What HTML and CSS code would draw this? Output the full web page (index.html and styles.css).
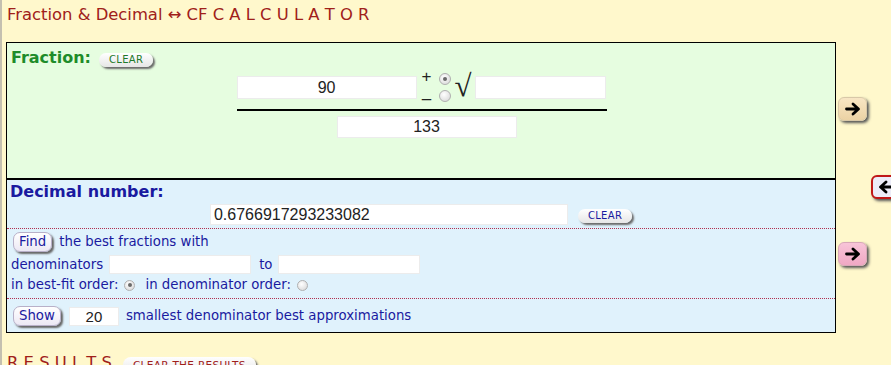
FILE: index.html
```html
<!DOCTYPE html>
<html>
<head>
<meta charset="utf-8">
<link rel="stylesheet" href="styles.css">
</head>
<body>
<div class="page">
  <div class="title">Fraction &amp; Decimal ↔ CF C A L C U L A T O R</div>
  <div class="main">
    <div class="calc">
      <div class="frac-box">
        <div class="head"><span class="label green">Fraction:</span><span class="pill green-t">CLEAR</span></div>
        <div class="fraction">
          <div class="num-row">
            <div class="inp num">90</div>
            <div class="pm">
              <div class="pm-row"><span class="sign">+</span><span class="radio on"></span></div>
              <div class="pm-row"><span class="sign">–</span><span class="radio"></span></div>
            </div>
            <span class="sqrt">√</span>
            <div class="inp rad"></div>
          </div>
          <div class="bar"></div>
          <div class="inp den">133</div>
        </div>
      </div>
      <div class="dec-box">
        <div class="label blue">Decimal number:</div>
        <div class="dec-row">
          <div class="inp dec">0.6766917293233082</div>
          <span class="pill blue-t">CLEAR</span>
        </div>
        <div class="find">
          <div class="line"><span class="btn">Find</span><span class="txt">the best fractions with</span></div>
          <div class="line l2"><span class="txt">denominators</span><div class="inp small"></div><span class="txt to">to</span><div class="inp small"></div></div>
          <div class="line l3"><span class="txt">in best-fit order:</span><span class="radio on"></span><span class="txt gap">in denominator order:</span><span class="radio"></span></div>
        </div>
        <div class="show">
          <span class="btn">Show</span><div class="inp count">20</div><span class="txt">smallest denominator best approximations</span>
        </div>
      </div>
    </div>
    <div class="side">
      <div class="arrow tan"><svg width="16" height="14" viewBox="0 0 16 14"><path d="M1.5 7H13M8 2L13.5 7L8 12" fill="none" stroke="#000" stroke-width="2.8" stroke-linecap="round" stroke-linejoin="round"/></svg></div>
      <div class="arrow back"><svg width="16" height="14" viewBox="0 0 16 14"><path d="M14.5 7H3M8 2L2.5 7L8 12" fill="none" stroke="#000" stroke-width="2.8" stroke-linecap="round" stroke-linejoin="round"/></svg></div>
      <div class="arrow pink"><svg width="16" height="14" viewBox="0 0 16 14"><path d="M1.5 7H13M8 2L13.5 7L8 12" fill="none" stroke="#000" stroke-width="2.8" stroke-linecap="round" stroke-linejoin="round"/></svg></div>
    </div>
  </div>
  <div class="results"><span class="res-title">R E S U L T S</span><span class="pill red-t">CLEAR THE RESULTS</span></div>
</div>
</body>
</html>
```
FILE: styles.css
```css
html, body { margin: 0; padding: 0; }
body { background: #fff8cc; font-family: "DejaVu Sans", Verdana, sans-serif; overflow: hidden; }
.page { border-left: 2px solid #c4c0b0; padding-left: 4px; height: 365px; box-sizing: border-box; width: 891px; }
.title { color: #a0201a; font-size: 16.4px; line-height: 19px; padding-top: 5px; padding-left: 1px; }
.main { display: flex; margin-top: 18px; }
.calc { width: 830px; border: 1px solid #000; }
.frac-box { background: #e6fde0; height: 135px; border-bottom: 2px solid #000; }
.head { display: flex; align-items: center; padding: 2px 0 0 4px; height: 24px; }
.label { font-weight: bold; font-size: 16px; line-height: 19px; }
.green { color: #1e8c2a; }
.blue { color: #1a1aa0; }
.pill { display: inline-block; font-size: 10px; line-height: 14px; height: 14px; padding: 0 10px; border-radius: 8px; background: linear-gradient(#ffffff, #e6e6e6); box-shadow: 2px 2px 2px #6a6a6a; letter-spacing: 0.3px; }
.head .pill { margin-left: 8px; margin-top: 5px; }
.green-t { color: #1e7a2a; }
.blue-t { color: #1a1aa0; }
.red-t { color: #a0201a; }
.fraction { display: flex; flex-direction: column; align-items: center; margin-top: 7px; padding-left: 2px; }
.num-row { display: flex; align-items: center; height: 23px; margin-left: -2px; }
.inp { background: #fff; border: 1px solid #ececec; box-sizing: border-box; font-family: "Liberation Sans", Arial, sans-serif; font-size: 16px; text-align: center; color: #222; }
.num { width: 180px; height: 23px; line-height: 21px; }
.rad { width: 131px; height: 23px; margin-left: 3px; }
.pm { display: flex; flex-direction: column; margin: -6px 0 -6px 4px; }
.pm-row { display: flex; align-items: center; height: 17px; }
.sign { font-family: "Liberation Sans", Arial, sans-serif; font-size: 17px; width: 12px; color: #222; line-height: 17px; text-align: center; }
.pm-row:first-child .sign { margin-top: -5px; }
.pm-row:last-child .sign { margin-top: 4px; }
.pm .radio { margin-left: 6px; width: 12px; height: 12px; }
.pm .radio.on::after { left: 3px; top: 3px; }
.radio { display: inline-block; width: 11px; height: 11px; border-radius: 50%; border: 1px solid #b0b0b0; background: radial-gradient(circle at 40% 35%, #ffffff, #d4d4d4); box-sizing: border-box; position: relative; }
.radio.on::after { content: ""; position: absolute; left: 2.5px; top: 2.5px; width: 4px; height: 4px; border-radius: 50%; background: #6a6a6a; }
.sqrt { font-family: "Liberation Serif", serif; font-size: 31px; line-height: 23px; margin-left: 4px; color: #222; margin-top: -5px; }
.bar { width: 370px; height: 2px; background: #000; margin-top: 10px; }
.den { width: 180px; height: 22px; line-height: 20px; margin-top: 5px; margin-left: 9px; }
.dec-box { background: #e0f2fc; height: 152px; }
.dec-box > .label { padding: 2px 0 0 3px; }
.dec-row { display: flex; align-items: center; justify-content: center; margin-top: 3px; }
.dec { width: 358px; height: 21px; line-height: 19px; text-align: left; padding-left: 3px; }
.dec-row .pill { margin-left: 10px; margin-top: 3px; }
.find { border-top: 1px dotted #b03050; border-bottom: 1px dotted #b03050; margin-top: 3px; padding: 3px 0 5px 4px; }
.line { display: flex; align-items: center; }
.txt { color: #1a1aa0; font-size: 13.3px; line-height: 16px; }
.btn { display: inline-block; font-size: 13.3px; line-height: 18px; height: 18px; padding: 0 5px; color: #1a1aa0; background: linear-gradient(#ffffff, #ece8f4); border: 1px solid #b8b0c8; border-radius: 7px; box-shadow: 2px 2px 2px #666; margin-left: 2px; margin-right: 7px; }
.l2 { margin-top: 3px; }
.small { width: 142px; height: 19px; margin-left: 6px; }
.to { margin-left: 8px; margin-right: 5px; }
.to + .small { margin-left: 0; }
.l3 { margin-top: 3px; }
.l3 .radio { margin-left: 6px; }
.gap { margin-left: 10px; }
.show { display: flex; align-items: center; padding: 7px 0 0 4px; }
.count { width: 50px; height: 19px; line-height: 17px; font-size: 15px; margin-right: 7px; margin-left: 1px; }
.side { position: relative; width: 55px; }
.arrow { position: absolute; width: 29px; height: 24px; border-radius: 6px; display: flex; align-items: center; justify-content: center; box-shadow: 2px 2px 3px #555; box-sizing: border-box; }
.tan { left: 2px; top: 55px; background: linear-gradient(#f8e6c4, #ecd2a4); border: 1px solid #d8c8a8; }
.back { left: 35px; top: 133px; background: #ececf8; border: 2px solid #c01818; }
.pink { left: 2px; top: 200px; background: linear-gradient(#f8c4d8, #f0a8c4); border: 1px solid #d8a8b8; }
.results { display: flex; align-items: flex-end; margin-top: 20px; padding-left: 1px; }
.res-title { color: #a0201a; font-size: 16.4px; line-height: 20px; }
.results .pill { margin-left: 11px; font-size: 10.5px; height: 16px; line-height: 16px; padding: 0 10px; }
```
